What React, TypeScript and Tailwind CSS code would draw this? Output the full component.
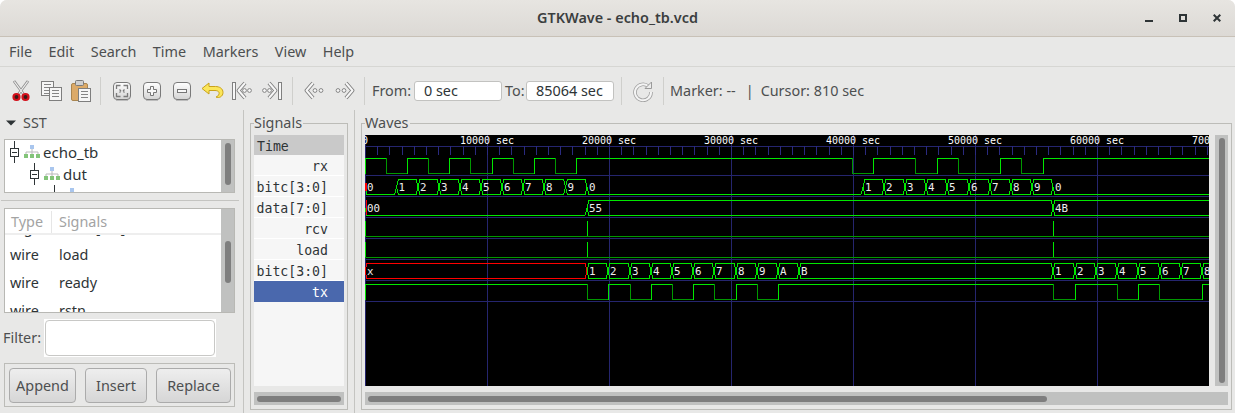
import React from "react";

const GRID = [365, 487, 609, 731, 853, 975, 1097];
const HLINES = [146, 175, 196, 217, 238, 259, 280, 301];
const HI = "#00e800";
const LO = "#009800";

type Seg = { a: number; b: number; v: string; zero?: boolean; red?: boolean };

function bin(edges: number[], start: 1 | 0, hi: number, lo: number, end: number) {
  const out: React.ReactNode[] = [];
  let level = start;
  let x = 365;
  const all = [...edges, end];
  all.forEach((e, i) => {
    const y = level ? hi : lo;
    out.push(<line key={`h${i}`} x1={x} x2={e} y1={y + 0.5} y2={y + 0.5} stroke={level ? HI : LO} />);
    if (i < edges.length) {
      out.push(
        <line key={`v${i}`} x1={e + 0.5} x2={e + 0.5} y1={hi} y2={lo + 1} stroke={level ? LO : HI} />
      );
    }
    level = level ? 0 : 1;
    x = e;
  });
  return out;
}

function vec(segs: Seg[], hi: number, lo: number, keyPrefix: string) {
  const mid = (hi + lo) / 2 + 0.5;
  return segs.map((s, i) => {
    const l = s.a;
    const pts = s.zero
      ? `${l},${mid} ${l + 2},${lo + 0.5} ${s.b - 2},${lo + 0.5} ${s.b},${mid}`
      : `${l},${mid} ${l + 2},${hi + 0.5} ${s.b - 2},${hi + 0.5} ${s.b},${mid} ${s.b - 2},${lo + 0.5} ${l + 2},${lo + 0.5} ${l},${mid}`;
    return (
      <g key={`${keyPrefix}${i}`}>
        <polyline points={pts} fill="none" stroke={s.red ? "#ff0000" : HI} />
        <text x={s.a + 2} y={lo - 3} fontSize={10.8} fill="#eeeeee" fontFamily="'DejaVu Sans Mono', monospace">
          {s.v}
        </text>
      </g>
    );
  });
}

function seq(bounds: number[], vals: string[], zeros: string[] = []): Seg[] {
  return vals.map((v, i) => ({ a: bounds[i], b: bounds[i + 1], v, zero: zeros.includes(v) }));
}

const WaveChart = () => {
  const ticks: number[] = [];
  for (let k = 1; k < 70; k++) ticks.push(Math.round(365 + 12.2 * k));
  const labels = [
    [365, "0"],
    [487, "10000 sec"],
    [609, "20000 sec"],
    [731, "30000 sec"],
    [853, "40000 sec"],
    [975, "50000 sec"],
    [1097, "60000 sec"],
    [1219, "70000 sec"],
  ] as [number, string][];

  const b1 = [365, 396.5, 418, 439, 460, 481, 502, 523, 544, 565.5, 587, 863, 884, 905, 926, 947, 969, 990, 1011, 1032, 1053, 1215];
  const v1 = ["0", "1", "2", "3", "4", "5", "6", "7", "8", "9", "0", "1", "2", "3", "4", "5", "6", "7", "8", "9", "0"];
  const b2 = [587, 608, 630, 651, 672, 693, 714, 736, 757, 778, 799, 1053, 1075, 1096, 1117, 1138, 1160, 1181, 1202, 1215];
  const v2 = ["1", "2", "3", "4", "5", "6", "7", "8", "9", "A", "B", "1", "2", "3", "4", "5", "6", "7", "8"];

  return (
    <svg viewBox="365 135 844 251" width={844} height={251} className="block">
      <rect x={365} y={135} width={844} height={251} fill="#000" />
      <g shapeRendering="crispEdges">
        {GRID.map((x) => (
          <line key={x} x1={x + 0.5} x2={x + 0.5} y1={135} y2={386} stroke="#25256e" />
        ))}
        {HLINES.map((y) => (
          <line key={y} x1={365} x2={1209} y1={y + 0.5} y2={y + 0.5} stroke="#25256e" />
        ))}
        {ticks.map((x) => (
          <line key={x} x1={x + 0.5} x2={x + 0.5} y1={146} y2={155} stroke="#2a2a80" />
        ))}
      </g>
      {labels.map(([x, t]) => (
        <text
          key={t}
          x={x}
          y={144}
          textAnchor="middle"
          fontSize={10}
          fill="#ffffff"
          fontFamily="'DejaVu Sans Mono', monospace"
        >
          {t}
        </text>
      ))}
      <g shapeRendering="crispEdges">
        {bin([386, 407, 428, 449, 470, 492, 513, 534, 555, 576, 852, 873, 915, 937, 958, 1000, 1021, 1043], 1, 158, 173, 1209)}
        <line x1={365.5} x2={365.5} y1={158} y2={174} stroke={HI} />
        {bin([587, 608, 630, 651, 672, 693, 714, 736, 757, 778, 1053, 1075, 1117, 1138, 1159, 1202], 1, 284, 299, 1209)}
        <line x1={365.5} x2={365.5} y1={284} y2={300} stroke={HI} />
        {[236, 257].map((y) => (
          <g key={y}>
            <line x1={365} x2={1209} y1={y + 0.5} y2={y + 0.5} stroke={LO} />
            {[365, 587, 1053].map((x) => (
              <line key={x} x1={x + 0.5} x2={x + 0.5} y1={y - 15} y2={y} stroke={HI} />
            ))}
          </g>
        ))}
      </g>
      <g shapeRendering="crispEdges">
        {vec(seq(b1, v1, ["0"]), 179, 194, "a")}
        {vec(
          [
            { a: 365, b: 587, v: "00", zero: true },
            { a: 587, b: 1053, v: "55" },
            { a: 1053, b: 1215, v: "4B" },
          ],
          200,
          215,
          "d"
        )}
        {vec([{ a: 365, b: 587, v: "x", red: true }], 263, 278, "x")}
        {vec(seq(b2, v2), 263, 278, "b")}
        <line x1={365.5} x2={365.5} y1={183} y2={191} stroke="#ff0000" />
        <line x1={366.5} x2={366.5} y1={183} y2={191} stroke="#ff0000" />
        <line x1={366.5} x2={366.5} y1={200} y2={215} stroke="#ff0000" />
      </g>
    </svg>
  );
};

const IconBtn = ({ children }: { children: React.ReactNode }) => (
  <div className="w-[30px] h-[24px] flex items-center justify-center shrink-0">{children}</div>
);
const Sep = ({ className }: { className: string }) => <div className={`w-px h-[28px] bg-[#cfcfcc] shrink-0 ${className}`} />;

const Scissors = () => (
  <svg width="20" height="22" viewBox="0 0 20 22">
    <path d="M3 1 L12.5 14 M17 1 L7.5 14" stroke="#8f8f8f" strokeWidth="2.8" />
    <path d="M3.3 1.5 L12.5 14 M16.7 1.5 L7.5 14" stroke="#f2f2f2" strokeWidth="1.2" />
    <circle cx="5.5" cy="17" r="3" fill="#3a1a1a" stroke="#d3101a" strokeWidth="2.2" />
    <circle cx="14.5" cy="17" r="3" fill="#3a1a1a" stroke="#d3101a" strokeWidth="2.2" />
  </svg>
);
const Doc = ({ x, y, w, h }: { x: number; y: number; w: number; h: number }) => (
  <g>
    <rect x={x + 0.5} y={y + 0.5} width={w} height={h} fill="#f6f6f6" stroke="#7e7e7e" />
    {Array.from({ length: Math.floor((h - 2) / 3) }).map((_, i) => (
      <line key={i} x1={x + 3} x2={x + w - 2} y1={y + 3.5 + i * 3} y2={y + 3.5 + i * 3} stroke="#858585" />
    ))}
  </g>
);
const Copy = () => (
  <svg width="21" height="20" viewBox="0 0 21 20">
    <Doc x={0} y={0} w={12} h={14} />
    <Doc x={8} y={6} w={12} h={13} />
  </svg>
);
const Paste = () => (
  <svg width="20" height="22" viewBox="0 0 20 22">
    <rect x="0.5" y="3.5" width="16" height="17" rx="1.5" fill="#dcaa68" stroke="#a98550" />
    <rect x="4.5" y="0.5" width="8" height="5" rx="1" fill="#cfcfcf" stroke="#7b7b7b" />
    <Doc x={7} y={8} w={12} h={13} />
  </svg>
);
const Square = ({ children }: { children: React.ReactNode }) => (
  <svg width="18" height="19" viewBox="0 0 18 19">
    <defs>
      <linearGradient id="sq" x1="0" y1="0" x2="0" y2="1">
        <stop offset="0" stopColor="#ffffff" />
        <stop offset="1" stopColor="#d4d4d4" />
      </linearGradient>
    </defs>
    <rect x="0.5" y="0.5" width="17" height="17" rx="3.5" fill="url(#sq)" stroke="#7a7a7a" />
    <line x1="3" x2="15" y1="18.5" y2="18.5" stroke="#bcbcbc" />
    {children}
  </svg>
);
const Fit = () => (
  <Square>
    <path
      d="M3.5 7V3.5H7.5 M10.5 3.5H14.5V7 M14.5 11V14.5H10.5 M7.5 14.5H3.5V11 M6.5 7.5L8 9 M11.5 7.5L10 9 M6.5 10.5L8 9 M11.5 10.5L10 9"
      fill="none"
      stroke="#7c7c7c"
      strokeWidth="1.3"
    />
  </Square>
);
const ZoomIn = () => (
  <Square>
    <path d="M7.5 4.5h3v3h3v3h-3v3h-3v-3h-3v-3h3z" fill="#f8f8f8" stroke="#767676" />
  </Square>
);
const ZoomOut = () => (
  <Square>
    <rect x="4.5" y="7.5" width="9" height="3" fill="#f8f8f8" stroke="#767676" />
  </Square>
);
const Undo = () => (
  <svg width="23" height="18" viewBox="0 0 23 18">
    <path
      d="M8 1 L1 6.5 L8 12 V8.5 H14 C17.5 8.5 18.5 10.5 18 12 C17.7 13.5 16.5 14.5 15 15 C18 16.5 22 14.5 22 10.5 C22 6.5 18.5 4.5 14.5 4.5 H8 Z"
      fill="#fbe65a"
      stroke="#c9a21b"
      strokeWidth="1"
      strokeLinejoin="round"
    />
  </svg>
);
const Chev = ({ d }: { d: string }) => (
  <>
    <path d={d} fill="none" stroke="#7d7d7d" strokeWidth="3.8" strokeLinejoin="round" />
    <path d={d} fill="none" stroke="#f7f7f7" strokeWidth="2" strokeLinejoin="round" />
  </>
);
const Dot = ({ x }: { x: number }) => <circle cx={x} cy="9.5" r="1.9" fill="#f7f7f7" stroke="#858585" strokeWidth="1" />;
const First = () => (
  <svg width="20" height="20" viewBox="0 0 20 20">
    <rect x="0.5" y="1.5" width="3" height="17" fill="#f7f7f7" stroke="#808080" />
    <Chev d="M13 2 L6.5 9.5 L13 17" />
    <Dot x={12.5} />
    <Dot x={17.5} />
  </svg>
);
const Last = () => (
  <svg width="20" height="20" viewBox="0 0 20 20">
    <rect x="16.5" y="1.5" width="3" height="17" fill="#f7f7f7" stroke="#808080" />
    <Chev d="M7 2 L13.5 9.5 L7 17" />
    <Dot x={7.5} />
    <Dot x={2.5} />
  </svg>
);
const Prev = () => (
  <svg width="21" height="20" viewBox="0 0 21 20">
    <Chev d="M9 2 L2.5 9.5 L9 17" />
    <Dot x={11} />
    <Dot x={17} />
  </svg>
);
const Next = () => (
  <svg width="21" height="20" viewBox="0 0 21 20">
    <Chev d="M12 2 L18.5 9.5 L12 17" />
    <Dot x={10} />
    <Dot x={4} />
  </svg>
);
const Reload = () => (
  <svg width="20" height="21" viewBox="0 0 20 21">
    <path d="M15.5 5.5 A8 8 0 1 0 18 11" fill="none" stroke="#a0a0a0" strokeWidth="3.6" />
    <path d="M15.5 5.5 A8 8 0 1 0 18 11" fill="none" stroke="#f4f4f4" strokeWidth="2" />
    <path d="M12 7.5 H18.5 V1 Z" fill="#ececec" stroke="#9a9a9a" />
  </svg>
);

const Hier = () => (
  <svg width="16" height="14" viewBox="0 0 16 14" className="shrink-0">
    <rect x="6" y="0" width="4" height="4" fill="#a9c6ee" />
    <path d="M8 4v3M2 7h12M2 7v2M8 7v2M14 7v2" stroke="#b9b9b9" fill="none" />
    <rect x="0" y="9" width="4" height="4" fill="#83c479" />
    <rect x="6" y="9" width="4" height="4" fill="#83c479" />
    <rect x="12" y="9" width="4" height="4" fill="#83c479" />
  </svg>
);

const Expander = () => (
  <svg width="9" height="22" viewBox="0 0 9 22" className="shrink-0">
    <path d="M4.5 0V7 M4.5 15V22 M2 11.5H7" stroke="#2e3436" fill="none" />
    <rect x="0.5" y="7.5" width="8" height="8" fill="none" stroke="#2e3436" />
  </svg>
);

const Thumb = ({ className }: { className: string }) => (
  <div className={`bg-[#7e7e7e] rounded-full ${className}`} />
);

const SignalRow = ({ label, selected }: { label: string; selected?: boolean }) => (
  <div
    className={`h-[21px] flex items-center justify-end pr-[16px] pt-[4px] border-b ${
      selected ? "bg-[#4a68ad] text-white border-b-[#4a68ad]" : "bg-[#f6f6f6] text-[#2e3436] border-b-white"
    }`}
  >
    {label}
  </div>
);

const Frame = ({ label, className, children }: { label: string; className: string; children: React.ReactNode }) => (
  <div className={`relative border border-[#bcbcb8] ${className}`}>
    <span className="absolute -top-[11px] left-[3px] bg-[#e8e8e7] pr-[1px] text-[14.4px] leading-[20px] text-[#4d4f50]">
      {label}
    </span>
    {children}
  </div>
);

const Btn = ({ label, className }: { label: string; className: string }) => (
  <div
    className={`h-[35px] pt-[2px] flex items-center justify-center rounded-[4px] border border-[#ababab] bg-gradient-to-b from-[#eeeeee] to-[#d6d6d6] text-[14.4px] text-[#4d4f50] ${className}`}
  >
    {label}
  </div>
);

const ListRow = ({ a, b, className }: { a: string; b: string; className: string }) => (
  <div className={`flex items-center text-[14.4px] text-[#2e3436] shrink-0 ${className}`}>
    <span className="w-[54px] pl-[5px]">{a}</span>
    <span>{b}</span>
  </div>
);

export default function App() {
  return (
    <div className="w-[1235px] h-[413px] overflow-hidden bg-white font-['Noto_Sans',sans-serif] text-[14.4px] text-[#4d4f50]">
      <div className="h-full flex flex-col bg-[#e8e8e7] rounded-t-[7px]">
        {/* Title bar */}
        <div className="h-[37px] shrink-0 grid grid-cols-[1fr_auto_1fr] items-center bg-gradient-to-b from-[#e7e5e1] to-[#dcd9d5] border-b border-[#c8c1b7] rounded-t-[7px]">
          <div />
          <div className="font-semibold text-[14.4px] text-[#3b3e3f]">GTKWave - echo_tb.vcd</div>
          <div className="flex justify-end items-center pr-[14px] gap-[26px]">
            <svg width="8" height="9" viewBox="0 0 8 9">
              <rect x="0" y="6" width="8" height="2" fill="#2e3436" />
            </svg>
            <svg width="8" height="9" viewBox="0 0 8 9">
              <rect x="1" y="1" width="6" height="6" fill="none" stroke="#2e3436" strokeWidth="2" />
            </svg>
            <svg width="8" height="9" viewBox="0 0 8 9">
              <path d="M0.7 0.7L7.3 7.3M7.3 0.7L0.7 7.3" stroke="#2e3436" strokeWidth="2" />
            </svg>
          </div>
        </div>

        {/* Menu */}
        <div className="h-[30px] shrink-0 flex items-center pl-[9px] gap-[16.5px] border-b border-[#d6d6d3]">
          {["File", "Edit", "Search", "Time", "Markers", "View", "Help"].map((m) => (
            <span key={m}>{m}</span>
          ))}
        </div>

        {/* Toolbar */}
        <div className="h-[43px] shrink-0 flex items-center pt-[5px] pl-[6px]">
          <IconBtn><Scissors /></IconBtn>
          <IconBtn><Copy /></IconBtn>
          <IconBtn><Paste /></IconBtn>
          <Sep className="ml-[4px]" />
          <div className="ml-[6px] flex">
            <IconBtn><Fit /></IconBtn>
            <IconBtn><ZoomIn /></IconBtn>
            <IconBtn><ZoomOut /></IconBtn>
            <IconBtn><Undo /></IconBtn>
            <IconBtn><First /></IconBtn>
            <IconBtn><Last /></IconBtn>
          </div>
          <Sep className="ml-[5px]" />
          <div className="ml-[6px] flex">
            <IconBtn><Prev /></IconBtn>
            <IconBtn><Next /></IconBtn>
          </div>
          <Sep className="ml-[5px]" />
          <span className="ml-[7px] w-[42px] shrink-0">From:</span>
          <input
            readOnly
            value="0 sec"
            className="w-[88px] h-[20px] pl-[9px] bg-white border border-[#c2c2c0] rounded-[3px] text-[14.4px] text-[#2e3436] outline-none"
          />
          <span className="ml-[3px] w-[21px] shrink-0">To:</span>
          <input
            readOnly
            value="85064 sec"
            className="w-[88px] h-[20px] pl-[9px] bg-white border border-[#c2c2c0] rounded-[3px] text-[14.4px] text-[#2e3436] outline-none"
          />
          <Sep className="ml-[7px]" />
          <div className="ml-[11px] w-[20px] flex justify-center"><Reload /></div>
          <Sep className="ml-[10px]" />
          <span className="ml-[6px]">Marker: --</span>
          <span className="ml-[10px]">|</span>
          <span className="ml-[7px]">Cursor: 810 sec</span>
        </div>

        {/* Main */}
        <div className="flex-1 min-h-0 flex">
          {/* Left pane */}
          <div className="w-[244px] shrink-0 border-r border-[#c4c4c1] pl-[4px] flex flex-col">
            <div className="h-[29px] shrink-0 flex items-start pt-[3px]">
              <svg width="10" height="20" viewBox="0 0 10 20" className="ml-[2px]">
                <path d="M0 7.5H10L5 12.5Z" fill="#2e3436" />
              </svg>
              <span className="ml-[7px] leading-[20px]">SST</span>
            </div>
            <div className="w-[231px] h-[54px] shrink-0 border border-[#b8b8b4] flex overflow-hidden">
              <div className="flex-1 bg-white overflow-hidden text-[#2e3436] text-[15px]">
                <div className="h-[22px] mt-px flex items-center pl-[5px]">
                  <Expander />
                  <span className="ml-[5px]"><Hier /></span>
                  <span className="ml-[3px]">echo_tb</span>
                </div>
                <div className="h-[22px] flex items-center pl-[25px]">
                  <Expander />
                  <span className="ml-[5px]"><Hier /></span>
                  <span className="ml-[3px]">dut</span>
                </div>
                <div className="h-[8px] flex pl-[49px]">
                  <div className="w-px h-full bg-[#2e3436]" />
                  <div className="ml-[15px] mt-[3px] w-[4px] h-[4px] bg-[#a9c6ee]" />
                </div>
              </div>
              <div className="w-[13px] bg-[#c0c1c0] flex justify-center py-[3px]">
                <Thumb className="w-[6px] h-[42px]" />
              </div>
            </div>
            <div className="h-px w-[238px] -ml-[3px] mt-[7px] bg-[#c4c4c1] shrink-0" />
            <div className="w-[231px] h-[105px] mt-[7px] shrink-0 border border-[#b8b8b4] flex overflow-hidden">
              <div className="flex-1 bg-white flex flex-col overflow-hidden">
                <div className="h-[26px] pt-[2px] shrink-0 flex items-center border-b-2 border-[#eeeeee] text-[#a3a3a3] relative z-10 bg-white">
                  <span className="w-[47px] pl-[6px] border-r border-[#e6e6e6] h-full flex items-center">Type</span>
                  <span className="pl-[7px]">Signals</span>
                </div>
                <div className="-mt-[20px]">
                  <ListRow a="reg" b="data_[7:0]" className="h-[26px]" />
                  <ListRow a="wire" b="load" className="h-[28px]" />
                  <ListRow a="wire" b="ready" className="h-[28px]" />
                  <ListRow a="wire" b="rstn" className="h-[28px]" />
                </div>
              </div>
              <div className="w-[13px] bg-[#c0c1c0] flex justify-center pt-[32px]">
                <Thumb className="w-[6px] h-[42px]" />
              </div>
            </div>
            <div className="h-[38px] mt-[6px] shrink-0 flex items-center -ml-[1px]">
              <span className="w-[41px]">Filter:</span>
              <div className="w-[172px] h-[38px] bg-white p-px">
                <div className="w-full h-full border border-[#c8c8c6] rounded-[4px] bg-white" />
              </div>
            </div>
            <div className="w-[231px] h-[44px] mt-[6px] shrink-0 border border-[#bcbcb8] flex items-center pl-[4px]">
              <Btn label="Append" className="w-[67px]" />
              <Btn label="Insert" className="w-[62px] ml-[9px]" />
              <Btn label="Replace" className="w-[75px] ml-[9px]" />
            </div>
          </div>

          {/* Signals pane */}
          <div className="w-[111px] shrink-0 border-r border-[#c4c4c1] pl-[6px] pr-[6px] pt-[13px] pb-[3px] flex">
            <Frame label="Signals" className="flex-1 px-[3px] pt-[11px] pb-[4px] flex flex-col">
              <div className="h-[251px] shrink-0 bg-[#f6f6f6] font-['DejaVu_Sans_Mono',monospace] text-[13.2px]">
                <div className="h-[20px] bg-[#c9c9c9] flex items-center pl-[3px] pt-[4px] text-[#2e3436]">Time</div>
                <SignalRow label="rx" />
                <SignalRow label="bitc[3:0]" />
                <SignalRow label="data[7:0]" />
                <SignalRow label="rcv" />
                <SignalRow label="load" />
                <SignalRow label="bitc[3:0]" />
                <SignalRow label="tx" selected />
              </div>
              <div className="mt-[6px] h-[13px] bg-[#c0c1c0] flex items-center px-[3px]">
                <Thumb className="w-full h-[6px]" />
              </div>
            </Frame>
          </div>

          {/* Waves pane */}
          <div className="flex-1 min-w-0 pl-[6px] pr-[4px] pt-[13px] pb-[3px] flex">
            <Frame label="Waves" className="flex-1 px-[3px] pt-[11px] pb-[4px] flex flex-col">
              <div className="flex h-[251px] shrink-0">
                <div className="w-[844px] h-[251px] overflow-hidden shrink-0">
                  <WaveChart />
                </div>
                <div className="ml-[6px] w-[13px] bg-[#c0c1c0] flex justify-center py-[3px]">
                  <Thumb className="w-[6px] h-full" />
                </div>
              </div>
              <div className="mt-[6px] h-[13px] w-[863px] bg-[#c0c1c0] flex items-center px-[3px]">
                <Thumb className="w-[679px] h-[6px]" />
              </div>
            </Frame>
          </div>
        </div>
      </div>
    </div>
  );
}
